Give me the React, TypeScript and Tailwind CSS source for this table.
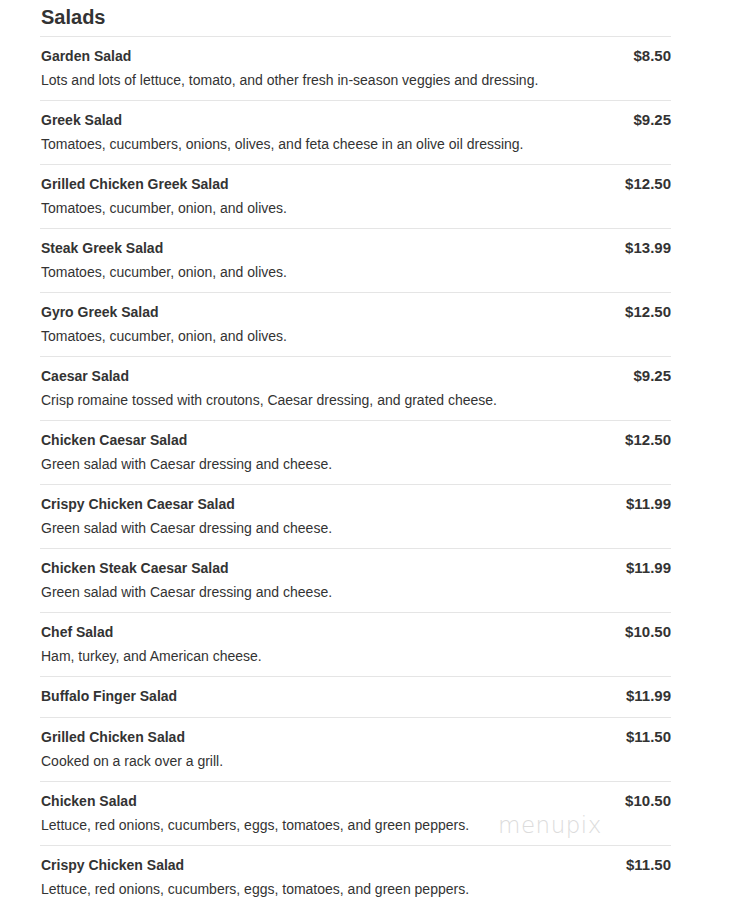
import React from "react";

interface Item {
  name: string;
  price: string;
  desc?: string;
}

const items: Item[] = [
  { name: "Garden Salad", price: "$8.50", desc: "Lots and lots of lettuce, tomato, and other fresh in-season veggies and dressing." },
  { name: "Greek Salad", price: "$9.25", desc: "Tomatoes, cucumbers, onions, olives, and feta cheese in an olive oil dressing." },
  { name: "Grilled Chicken Greek Salad", price: "$12.50", desc: "Tomatoes, cucumber, onion, and olives." },
  { name: "Steak Greek Salad", price: "$13.99", desc: "Tomatoes, cucumber, onion, and olives." },
  { name: "Gyro Greek Salad", price: "$12.50", desc: "Tomatoes, cucumber, onion, and olives." },
  { name: "Caesar Salad", price: "$9.25", desc: "Crisp romaine tossed with croutons, Caesar dressing, and grated cheese." },
  { name: "Chicken Caesar Salad", price: "$12.50", desc: "Green salad with Caesar dressing and cheese." },
  { name: "Crispy Chicken Caesar Salad", price: "$11.99", desc: "Green salad with Caesar dressing and cheese." },
  { name: "Chicken Steak Caesar Salad", price: "$11.99", desc: "Green salad with Caesar dressing and cheese." },
  { name: "Chef Salad", price: "$10.50", desc: "Ham, turkey, and American cheese." },
  { name: "Buffalo Finger Salad", price: "$11.99" },
  { name: "Grilled Chicken Salad", price: "$11.50", desc: "Cooked on a rack over a grill." },
  { name: "Chicken Salad", price: "$10.50", desc: "Lettuce, red onions, cucumbers, eggs, tomatoes, and green peppers." },
  { name: "Crispy Chicken Salad", price: "$11.50", desc: "Lettuce, red onions, cucumbers, eggs, tomatoes, and green peppers." },
];

export default function App() {
  return (
    <div className="relative min-h-[908px] bg-white text-[#333] font-['Liberation_Sans',Arial,sans-serif]">
      <div className="ml-[40px] w-[631px]">
        <h2 className="pt-[5px] pb-[6px] pl-px text-[20px] leading-[25px] font-bold text-[#333]">Salads</h2>
        <div>
          {items.map((item) => (
            <div
              key={item.name}
              className={
                item.desc
                  ? "flex justify-between border-t border-[#e5e5e5] pl-px pt-[9px] pb-[10px]"
                  : "flex justify-between border-t border-[#e5e5e5] pl-px pt-[9px] pb-[11px]"
              }
            >
              <div>
                <p className="text-[14px] leading-[20px] font-bold">{item.name}</p>
                {item.desc && (
                  <p className="mt-[4px] text-[14px] leading-[20px]">{item.desc}</p>
                )}
              </div>
              <p className="text-[15px] leading-[20px] font-bold">{item.price}</p>
            </div>
          ))}
        </div>
      </div>
      <div className="pointer-events-none absolute left-[498px] top-[811px] text-[23px] leading-[28px] text-[#dcdcdc] tracking-[0.5px] font-['DejaVu_Sans',sans-serif] font-light">
        menupix
      </div>
    </div>
  );
}
